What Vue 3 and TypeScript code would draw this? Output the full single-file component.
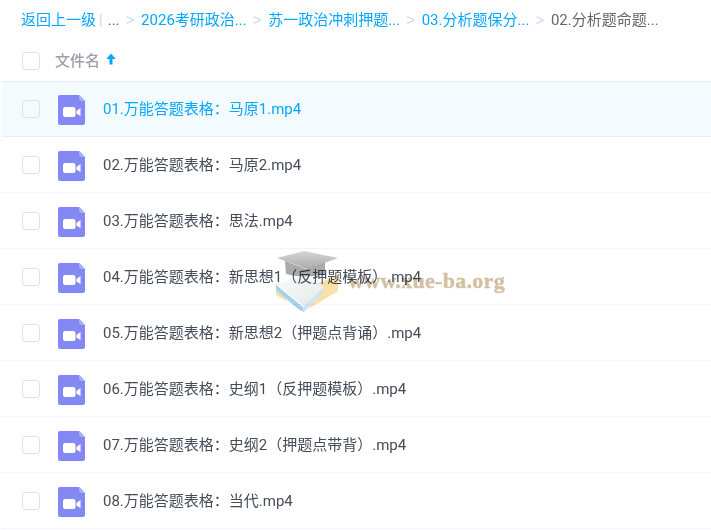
<script setup lang="ts">
const crumbs = ['2026考研政治...', '苏一政治冲刺押题...', '03.分析题保分...']

const files = [
  '01.万能答题表格：马原1.mp4',
  '02.万能答题表格：马原2.mp4',
  '03.万能答题表格：思法.mp4',
  '04.万能答题表格：新思想1（反押题模板）.mp4',
  '05.万能答题表格：新思想2（押题点背诵）.mp4',
  '06.万能答题表格：史纲1（反押题模板）.mp4',
  '07.万能答题表格：史纲2（押题点带背）.mp4',
  '08.万能答题表格：当代.mp4',
]
</script>

<template>
  <div class="page">
    <div class="crumbs">
      <a class="link">返回上一级</a>
      <span class="bar">|</span>
      <span class="dots">...</span>
      <template v-for="c in crumbs" :key="c">
        <span class="sep">&gt;</span>
        <a class="link">{{ c }}</a>
      </template>
      <span class="sep">&gt;</span>
      <span class="current">02.分析题命题...</span>
    </div>

    <div class="head">
      <span class="check"></span>
      <span class="head-name">文件名</span>
      <svg class="arrow" width="10" height="12" viewBox="0 0 10 12">
        <path d="M5 .5 9.8 6H6.5v5.5h-3V6H.2z" fill="#06a7ff" />
      </svg>
    </div>

    <div v-for="(f, i) in files" :key="f" class="row" :class="{ active: i === 0 }">
      <span class="check"></span>
      <svg class="file-icon" width="27" height="30" viewBox="0 0 27 30">
        <path d="M2 0h19l6 6v22a2 2 0 0 1-2 2H2a2 2 0 0 1-2-2V2a2 2 0 0 1 2-2z" fill="#8488f4" />
        <path d="M21 0l6 6h-4a2 2 0 0 1-2-2z" fill="#a9acf7" />
        <rect x="5" y="12" width="12.500" height="10" rx="2" fill="#fff" />
        <path d="M18.500 16 22.500 13v8L18.500 18.500z" fill="#fff" />
      </svg>
      <span class="name">{{ f }}</span>
    </div>

    <div class="watermark">
      <svg width="78" height="72" viewBox="0 0 78 72">
        <defs>
          <linearGradient id="cap" x1="0" y1="0" x2="0" y2="1">
            <stop offset="0" stop-color="#d6d6d6" />
            <stop offset="1" stop-color="#ababab" />
          </linearGradient>
          <linearGradient id="page" x1="0" y1="0" x2="1" y2="1">
            <stop offset="0" stop-color="#f9fafa" />
            <stop offset="1" stop-color="#e6e8e9" />
          </linearGradient>
        </defs>
        <path d="M68 30 68 46 40 63 30 46z" fill="#fddfa9" />
        <path d="M6 38 6 50 18 57z" fill="#fddfa9" />
        <path d="M6 39 34 30 54 42 35 62z" fill="url(#page)" />
        <path d="M6 40 33 62 34 67 28 64 6 45z" fill="#a3d2ea" />
        <path d="M33 62 52 44 54 47 34 67z" fill="#cfe4ef" />
        <path d="M15 16 16 29Q35 34 55 29L55 16 36 24z" fill="#aaa" />
        <path d="M7 13 34 6 68 13 37 24z" fill="url(#cap)" />
      </svg>
      <span class="wm-text">www.xue-ba.org</span>
    </div>
  </div>
</template>

<style>
html,
body {
  background: #fff;
  overflow: hidden;
}
</style>

<style scoped>
.page {
  position: relative;
  width: 711px;
  height: 530px;
  overflow: hidden;
  padding-left: 2px;
  box-sizing: border-box;
  font-family: Roboto, "Noto Sans CJK SC", sans-serif;
  font-size: 15px;
  color: #454d5a;
}

.crumbs {
  height: 40px;
  display: flex;
  align-items: center;
  padding-left: 19px;
  white-space: nowrap;
  line-height: 20px;
}

.link {
  color: #06a7ff;
}

.bar {
  color: #c8d6ec;
  margin: 0 5px 0 3px;
}

.dots,
.current {
  color: #666;
}

.sep {
  color: #c4d8f4;
  margin: 0 6.4px;
  font-family: "Liberation Sans", sans-serif;
}

.head {
  height: 41px;
  display: flex;
  align-items: center;
  padding-left: 20px;
  border-bottom: 1px solid #e3ecf8;
}

.head-name {
  margin-left: 15px;
  margin-top: -2px;
  color: #9ba0ab;
  font-weight: 500;
}

.arrow {
  margin-left: 6px;
  margin-top: -3px;
}

.check {
  width: 16px;
  height: 16px;
  border: 1px solid #dde3ea;
  border-radius: 3px;
  background: #fff;
  flex: none;
}

.row {
  height: 56px;
  display: flex;
  align-items: center;
  padding-left: 20px;
  box-sizing: border-box;
  border-bottom: 1px solid #f2f6fc;
}

.row.active {
  height: 55px;
  background: #f3fbff;
  border-bottom-color: #dff1fd;
  color: #06a7ff;
}

.row.active .check {
  background: transparent;
}

.file-icon {
  margin-left: 18px;
  margin-top: 2px;
  flex: none;
}

.name {
  margin-left: 18px;
  margin-top: -2px;
  white-space: nowrap;
}

.row.active .name {
  margin-top: -3px;
}

/* site stamp sitting over the list */
.watermark {
  position: absolute;
  left: 270px;
  top: 245px;
  display: flex;
  align-items: center;
  mix-blend-mode: multiply;
  pointer-events: none;
}

.wm-text {
  font-family: "Liberation Serif", serif;
  font-size: 22px;
  font-weight: 700;
  letter-spacing: 0.3px;
  color: #d3c0a3;
  -webkit-text-stroke: 0.4px #d3c0a3;
}
</style>
